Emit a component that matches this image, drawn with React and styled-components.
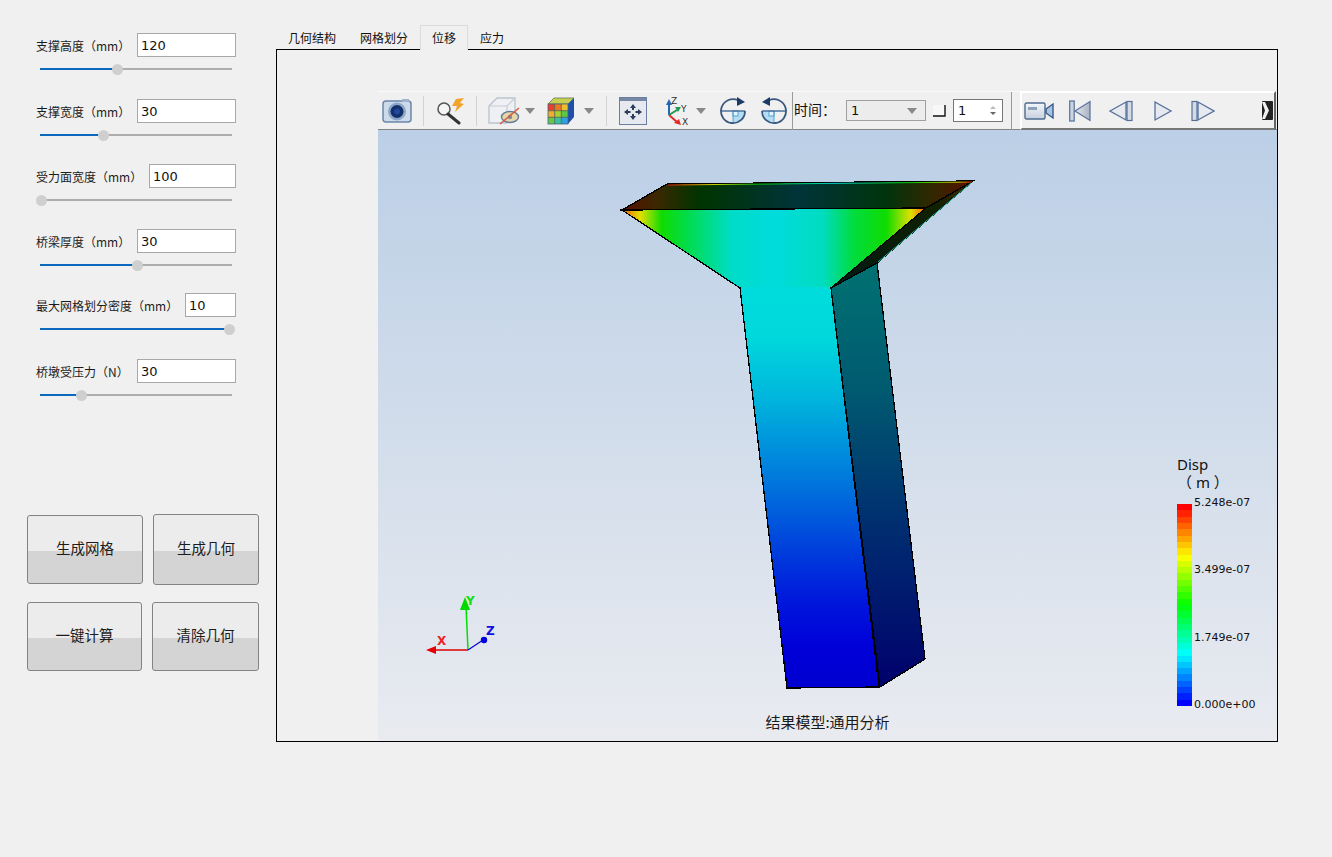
import styled, { createGlobalStyle } from 'styled-components';

const CJK = '"Noto Sans CJK SC", "Noto Sans", sans-serif';

const params = [
  { label: '支撑高度（mm）', value: '120', inputW: 99, knob: 77, height: 66 },
  { label: '支撑宽度（mm）', value: '30', inputW: 99, knob: 63, height: 65 },
  { label: '受力面宽度（mm）', value: '100', inputW: 87, knob: 1, height: 65 },
  { label: '桥梁厚度（mm）', value: '30', inputW: 99, knob: 97, height: 64 },
  { label: '最大网格划分密度（mm）', value: '10', inputW: 51, knob: 189, height: 66 },
  { label: '桥墩受压力（N）', value: '30', inputW: 99, knob: 41, height: 65 },
];

const tabs = ['几何结构', '网格划分', '位移', '应力'];

const Global = createGlobalStyle`
  html, body {
    margin: 0;
    background: #f0f0f0;
    font-family: ${CJK};
  }
`;

const Page = styled.div`
  width: 1332px;
  height: 857px;
  display: flex;
  overflow: hidden;
  background: #f0f0f0;
`;

const Sidebar = styled.aside`
  width: 276px;
  flex: none;
  padding-top: 33px;
  box-sizing: border-box;
`;

const Group = styled.div`
  height: ${(p) => p.$height}px;
  margin-left: 36px;
  width: 200px;
`;

const FieldRow = styled.div`
  height: 24px;
  display: flex;
  align-items: center;
  justify-content: space-between;
`;

const Label = styled.span`
  font-size: 12px;
  color: #1c1c1c;
  white-space: nowrap;
`;

const Field = styled.div`
  width: ${(p) => p.$w}px;
  height: 24px;
  box-sizing: border-box;
  border: 1px solid #a8a8a8;
  background: #fff;
  padding-left: 3px;
  font: 13px/24px "DejaVu Sans", sans-serif;
  color: #111;
`;

const Slider = styled.div`
  margin: 7px 0 0 4px;
  width: 192px;
  height: 10px;
  display: flex;
  align-items: center;
`;

const Filled = styled.div`
  height: 2px;
  background: #0a68bd;
  flex: none;
`;

const Knob = styled.div`
  width: 11px;
  height: 11px;
  border-radius: 50%;
  background: #cfcfcf;
  flex: none;
  margin: 0 -5px;
  position: relative;
`;

const Rest = styled.div`
  height: 2px;
  flex: 1;
  background: #adadad;
`;

const ButtonRow = styled.div`
  margin: ${(p) => p.$mt}px 0 0 27px;
  width: 232px;
  height: ${(p) => p.$h}px;
  display: flex;
  align-items: center;
  gap: 10px;
`;

const ActionButton = styled.button`
  width: ${(p) => p.$w}px;
  height: ${(p) => p.$h}px;
  flex: none;
  padding: 0 0 5px;
  border: 1px solid #838383;
  border-radius: 3px;
  background: linear-gradient(#ececec 0 52%, #d4d4d4 52% 100%);
  font: 14.5px ${CJK};
  color: #1c1c1c;
`;

const Main = styled.main`
  width: 1002px;
  flex: none;
  margin-top: 25px;
`;

const TabBar = styled.div`
  height: 24px;
  display: flex;
`;

const Tab = styled.div`
  padding: 0 ${(p) => (p.$active ? 11 : 12)}px;
  box-sizing: border-box;
  line-height: 25px;
  font-size: 12px;
  color: #111;
  background: #f0f0f0;
  border: ${(p) => (p.$active ? '1px solid #dcdcdc' : 'none')};
  border-bottom: none;
  ${(p) => p.$active && 'position: relative; z-index: 1; height: 25px; line-height: 23px;'}
`;

const Frame = styled.div`
  height: 693px;
  box-sizing: border-box;
  border: 1px solid #000;
  padding: 41px 0 0 101px;
`;

const Viewer = styled.div`
  height: 650px;
  display: flex;
  flex-direction: column;
`;

const Toolbar = styled.div`
  height: 39px;
  flex: none;
  box-sizing: border-box;
  display: flex;
  align-items: center;
  border-top: 1px solid #fafafa;
  border-bottom: 1px solid #858585;
  background: #f0f0f0;
`;

const Slot = styled.div`
  width: ${(p) => p.$w}px;
  margin-left: ${(p) => p.$ml || 0}px;
  flex: none;
  display: flex;
  justify-content: center;
  align-items: center;
`;

const Sep = styled.div`
  width: 1px;
  height: ${(p) => (p.$dark ? 38 : 30)}px;
  margin-left: ${(p) => p.$ml || 0}px;
  flex: none;
  background: ${(p) => (p.$dark ? '#9a9a9a' : '#d2d2d2')};
`;

const TimeLabel = styled.span`
  width: 40px;
  margin: 0 0 3px 1px;
  flex: none;
  font-size: 14px;
  color: #111;
  white-space: nowrap;
`;

const Combo = styled.div`
  width: 80px;
  height: 21px;
  margin-left: 12px;
  flex: none;
  box-sizing: border-box;
  border: 1px solid #a0a0a0;
  background: #ececec;
  padding: 0 8px 0 4px;
  display: flex;
  align-items: center;
  justify-content: space-between;
  font: 13px "DejaVu Sans", sans-serif;
  color: #111;
`;

const Caret = styled.div`
  width: 0;
  height: 0;
  border-left: 5px solid transparent;
  border-right: 5px solid transparent;
  border-top: 6px solid #888;
`;

const Spin = styled.div`
  width: 50px;
  height: 23px;
  margin-left: 7px;
  flex: none;
  box-sizing: border-box;
  border: 1px solid #777;
  background: #fff;
  padding: 0 6px 0 4px;
  display: flex;
  align-items: center;
  justify-content: space-between;
  font: 13px "DejaVu Sans", sans-serif;
  color: #111;
`;

const SpinArrows = styled.div`
  display: flex;
  flex-direction: column;
  gap: 3px;
  &::before, &::after {
    content: '';
    width: 0;
    height: 0;
    border-left: 3px solid transparent;
    border-right: 3px solid transparent;
  }
  &::before { border-bottom: 3px solid #bbb; }
  &::after { border-top: 3px solid #666; }
`;

const PlayBar = styled.div`
  flex: 1;
  align-self: stretch;
  margin: -1px 1px -1px 8px;
  box-sizing: border-box;
  display: flex;
  align-items: center;
  border-top: 2px solid #fff;
  border-left: 2px solid #fff;
  border-right: 2px solid #666;
  border-bottom: 2px solid #777;
`;

const Overflow = styled.div`
  margin: 0 1px 0 auto;
  display: flex;
`;

const Canvas = styled.div`
  flex: 1;
  position: relative;
  background: linear-gradient(#bbcfe6, #e9ebf0);
  overflow: hidden;
`;

const Scene = styled.svg`
  display: block;
  width: 100%;
  height: 100%;
`;

const Legend = styled.div`
  position: absolute;
  left: 799px;
  top: 325px;
  color: #111;
`;

const LegendTitle = styled.div`
  font: 15px/18px "Noto Sans", ${CJK};
  white-space: pre;
`;

const LegendBody = styled.div`
  margin-top: 13px;
  display: flex;
  height: 202px;
`;

const ColorBar = styled.div`
  width: 15px;
  display: flex;
  flex-direction: column;
`;

const Swatch = styled.div`
  flex: 1;
`;

const Ticks = styled.div`
  margin: -8px 0 -6px 2px;
  display: flex;
  flex-direction: column;
  justify-content: space-between;
  font: 11px/14px "DejaVu Sans", sans-serif;
`;

const Caption = styled.div`
  position: absolute;
  left: 0;
  right: 0;
  bottom: 10px;
  text-align: center;
  font-size: 15px;
  line-height: 18px;
  color: #1a1a1a;
`;

const RotateSvg = styled.svg`
  ${(p) => p.$flip && 'transform: scaleX(-1);'}
`;

// rainbow steps of the colour bar, red on top and blue at the bottom
const rampColor = (t) => {
  const stops = [
    [255, 0, 0], [255, 255, 0], [0, 255, 0], [0, 255, 255], [0, 0, 255],
  ];
  const pos = Math.min(t * 4, 3.999);
  const i = Math.floor(pos);
  const f = pos - i;
  const c = stops[i].map((v, k) => Math.round(v + (stops[i + 1][k] - v) * f));
  return `rgb(${c.join(',')})`;
};

const rampSteps = Array.from({ length: 32 }, (_, i) => rampColor(i / 31));

const CameraIcon = () => (
  <svg width="30" height="26" viewBox="0 0 30 26">
    <rect x="1" y="3" width="28" height="21" rx="3" fill="#cddaea" stroke="#6b87a8" strokeWidth="1.5" />
    <rect x="20" y="1" width="7" height="3" fill="#9fb4cc" />
    <circle cx="15" cy="13.5" r="9" fill="#8aa6c8" />
    <circle cx="15" cy="13.5" r="6.5" fill="#14306a" />
    <circle cx="15" cy="13.5" r="3" fill="#22489a" />
  </svg>
);

const SearchIcon = () => (
  <svg width="30" height="28" viewBox="0 0 30 28">
    <circle cx="9" cy="12" r="6" fill="#f5f5f5" stroke="#555" strokeWidth="1.5" />
    <path d="M13 17 L24 26" stroke="#333" strokeWidth="3" strokeLinecap="round" />
    <path d="M21 2 L29 1 L25 6 L29 7 L20 15 L22 9 L17 9 Z" fill="#f2a32c" />
  </svg>
);

const BoxIcon = () => (
  <svg width="34" height="28" viewBox="0 0 34 28">
    <path d="M1 9 L9 1 L27 1 L27 17 L19 26 L1 26 Z" fill="#eef0f3" stroke="#b9c2ce" strokeWidth="1.3" />
    <path d="M1 9 L19 9 L27 1 M19 9 L19 26" fill="none" stroke="#c5ccd6" strokeWidth="1.2" />
    <ellipse cx="22" cy="20" rx="8.5" ry="5.5" fill="#e8d7a6" stroke="#5f7c9c" strokeWidth="1.4" />
    <circle cx="22" cy="20" r="2.2" fill="#7d8fa3" />
    <path d="M12 27 L31 11" stroke="#d6573c" strokeWidth="1.4" />
  </svg>
);

const cubeCells = [
  ['#e8402c', '#ec7a24', '#e8c030'],
  ['#ecae2c', '#a8d030', '#5cc848'],
  ['#64c850', '#38c0a0', '#30a0e0'],
];

const CubeIcon = () => (
  <svg width="28" height="28" viewBox="0 0 28 28">
    <path d="M1 7 L7 1 L27 1 L21 7 Z" fill="#c8d050" stroke="#5f7a55" strokeWidth="0.8" />
    <path d="M21 7 L27 1 L27 20 L21 27 Z" fill="#1f4fae" />
    {cubeCells.map((row, r) =>
      row.map((c, k) => (
        <rect key={`${r}-${k}`} x={1 + k * 6.67} y={7 + r * 6.67} width="6.67" height="6.67" fill={c} />
      ))
    )}
    <path d="M7.7 7 V27 M14.3 7 V27 M1 13.7 H21 M1 20.3 H21" stroke="#4d5a48" strokeWidth="0.8" />
    <rect x="1" y="7" width="20" height="20" fill="none" stroke="#4a5f7a" strokeWidth="0.8" />
  </svg>
);

const FitIcon = () => (
  <svg width="28" height="28" viewBox="0 0 28 28">
    <rect x="0.5" y="0.5" width="27" height="27" fill="#e6eaf0" stroke="#6d7f9f" />
    <rect x="1" y="1" width="26" height="3" fill="#7587a5" />
    <g fill="#2c3e5c">
      <path d="M14 7 L11 11 H13 V13 H15 V11 H17 Z" />
      <path d="M14 23 L11 19 H13 V17 H15 V19 H17 Z" />
      <path d="M5 15 L9 12 V14 H11.5 V16 H9 V18 Z" />
      <path d="M23 15 L19 12 V14 H16.5 V16 H19 V18 Z" />
    </g>
  </svg>
);

const AxesIcon = () => (
  <svg width="36" height="32" viewBox="0 0 36 32">
    <path d="M12 20 V8" stroke="#2566b0" strokeWidth="2" />
    <path d="M9 10 L12 4 L15 10 Z" fill="#2566b0" />
    <path d="M12 20 L20 15" stroke="#1d9a50" strokeWidth="2" />
    <path d="M18 12 L24 12 L21 17 Z" fill="#1d9a50" />
    <path d="M12 20 L20 27" stroke="#dc2c2c" strokeWidth="2" />
    <path d="M17 28 L24 30 L22 24 Z" fill="#dc2c2c" />
    <text x="14" y="9" fontSize="9" fontFamily="DejaVu Sans" fill="#333">Z</text>
    <text x="24" y="17" fontSize="9" fontFamily="DejaVu Sans" fill="#333">Y</text>
    <text x="25" y="30" fontSize="9" fontFamily="DejaVu Sans" fill="#333">X</text>
  </svg>
);

const RotateIcon = ({ flip }) => (
  <RotateSvg $flip={flip} width="28" height="28" viewBox="0 0 28 28">
    <path d="M14 14 H26 A12 12 0 0 1 14 26 Z" fill="#b4dcf3" />
    <rect x="14" y="14" width="5" height="5" fill="#e4f3fb" stroke="#3a94cc" strokeWidth="0.8" />
    <path d="M14 14 V26" stroke="#3a94cc" strokeWidth="0.8" />
    <path d="M2 14 H26" stroke="#3f6a96" strokeWidth="1.4" />
    <path d="M19 3.2 A12 12 0 1 0 26 14" fill="none" stroke="#3a587e" strokeWidth="1.8" />
    <path d="M18 0 L26 5 L18 9 Z" fill="#1c3a66" />
  </RotateSvg>
);

const CornerIcon = () => (
  <svg width="13" height="12" viewBox="0 0 13 12">
    <rect x="0" y="0" width="12" height="11" fill="#f7f7f7" />
    <path d="M0 11 H12 V0" fill="none" stroke="#111" strokeWidth="1.4" />
  </svg>
);

const VideoIcon = () => (
  <svg width="30" height="18" viewBox="0 0 30 18">
    <defs>
      <linearGradient id="videoBody" x1="0" y1="0" x2="0" y2="1">
        <stop offset="0" stopColor="#f4f6f9" />
        <stop offset="1" stopColor="#c6d0de" />
      </linearGradient>
    </defs>
    <rect x="1" y="1" width="20" height="16" rx="1.5" fill="url(#videoBody)" stroke="#4f6b90" strokeWidth="1.4" />
    <rect x="4" y="5" width="9" height="3" fill="#8fa1b8" />
    <path d="M22 7 L29 2 V16 L22 11 Z" fill="#a9c4de" stroke="#35598a" strokeWidth="1.4" />
  </svg>
);

const FirstIcon = () => (
  <svg width="22" height="22" viewBox="0 0 22 22">
    <defs>
      <linearGradient id="firstFill" x1="0" y1="0" x2="1" y2="0">
        <stop offset="0" stopColor="#e5e8ee" />
        <stop offset="1" stopColor="#aab2bf" />
      </linearGradient>
    </defs>
    <rect x="0.7" y="1" width="4.5" height="20" fill="#ccd4df" stroke="#54709a" strokeWidth="1.2" />
    <path d="M6 11 L21 1.5 V20.5 Z" fill="url(#firstFill)" stroke="#54709a" strokeWidth="1.2" />
  </svg>
);

const PrevIcon = () => (
  <svg width="24" height="22" viewBox="0 0 24 22">
    <path d="M1 11 L17 2 V20 Z" fill="#e6e9ef" stroke="#54709a" strokeWidth="1.3" />
    <rect x="18" y="1.5" width="5" height="19" fill="#d5dbe4" stroke="#54709a" strokeWidth="1.2" />
  </svg>
);

const PlayIcon = () => (
  <svg width="20" height="22" viewBox="0 0 20 22">
    <path d="M2 2 L18 11 L2 20 Z" fill="#e6e9ef" stroke="#54709a" strokeWidth="1.3" />
  </svg>
);

const NextIcon = () => (
  <svg width="24" height="22" viewBox="0 0 24 22">
    <rect x="1" y="1.5" width="5" height="19" fill="#d5dbe4" stroke="#54709a" strokeWidth="1.2" />
    <path d="M7 2 L23 11 L7 20 Z" fill="#e6e9ef" stroke="#54709a" strokeWidth="1.3" />
  </svg>
);

const OverflowIcon = () => (
  <svg width="11" height="19" viewBox="0 0 11 19">
    <rect width="11" height="19" rx="1" fill="#222" />
    <path d="M0 1 H3 L7 9.5 L3 18 H0 L3 9.5 Z" fill="#f0f0f0" />
  </svg>
);

const flareStops = [
  [0, '#f04a10'], [0.03, '#e8a000'], [0.06, '#e0e000'], [0.13, '#10dc00'],
  [0.22, '#00dc50'], [0.36, '#00dcc8'], [0.5, '#00dcdc'], [0.66, '#00dcc0'],
  [0.76, '#00dc40'], [0.87, '#10dc00'], [0.95, '#e0e000'], [0.985, '#f08000'], [1, '#f04010'],
];

const columnStops = [
  [0, '#00dcdc'], [0.12, '#00d8dc'], [0.28, '#00b4dc'], [0.4, '#0090dc'],
  [0.53, '#0068dc'], [0.65, '#0040dc'], [0.78, '#0018dc'], [0.9, '#0000d8'], [1, '#0000d0'],
];

const Model = () => (
  <Scene viewBox="378 130 899 611">
    <defs>
      <linearGradient id="flare" gradientUnits="userSpaceOnUse" x1="622" y1="0" x2="926" y2="0">
        {flareStops.map(([o, c]) => <stop key={o} offset={o} stopColor={c} />)}
      </linearGradient>
      <linearGradient id="column" gradientUnits="userSpaceOnUse" x1="0" y1="288" x2="0" y2="688">
        {columnStops.map(([o, c]) => <stop key={o} offset={o} stopColor={c} />)}
      </linearGradient>
      <linearGradient id="side" gradientUnits="userSpaceOnUse" x1="0" y1="263" x2="0" y2="687">
        <stop offset="0" stopColor="#007272" />
        <stop offset="0.3" stopColor="#005a70" />
        <stop offset="0.6" stopColor="#003070" />
        <stop offset="1" stopColor="#00006c" />
      </linearGradient>
      <linearGradient id="deck" gradientUnits="userSpaceOnUse" x1="622" y1="0" x2="973" y2="0">
        <stop offset="0" stopColor="#5a1000" />
        <stop offset="0.1" stopColor="#3a2800" />
        <stop offset="0.22" stopColor="#003400" />
        <stop offset="0.5" stopColor="#00343a" />
        <stop offset="0.75" stopColor="#00340c" />
        <stop offset="0.88" stopColor="#302800" />
        <stop offset="1" stopColor="#5a1000" />
      </linearGradient>
      <linearGradient id="under" gradientUnits="userSpaceOnUse" x1="973" y1="181" x2="831" y2="288">
        <stop offset="0" stopColor="#4a2a00" />
        <stop offset="0.25" stopColor="#102000" />
        <stop offset="1" stopColor="#001a14" />
      </linearGradient>
      <linearGradient id="rim" gradientUnits="userSpaceOnUse" x1="667" y1="0" x2="973" y2="0">
        <stop offset="0" stopColor="#e02000" />
        <stop offset="0.15" stopColor="#d0d000" />
        <stop offset="0.3" stopColor="#00c800" />
        <stop offset="0.55" stopColor="#00d0d0" />
        <stop offset="0.8" stopColor="#00c800" />
        <stop offset="0.95" stopColor="#d0d000" />
        <stop offset="1" stopColor="#e02000" />
      </linearGradient>
    </defs>

    <g stroke="#000" strokeWidth="1.3" shapeRendering="crispEdges">
      <polygon points="831,288 877,263 925,659 880,687" fill="url(#side)" />
      <polygon points="926,208 973,181 877,263 831,288" fill="url(#under)" />
      <polygon points="622,210 667,184 973,181 926,208" fill="url(#deck)" />
      <polygon points="740,288 831,288 879,687 787,688" fill="url(#column)" />
      <polygon points="622,210 926,208 831,288 740,288" fill="url(#flare)" />
    </g>
    <line x1="741" y1="288" x2="830" y2="288" stroke="#00dcdc" strokeWidth="2" />
    <line x1="668" y1="185" x2="972" y2="182" stroke="url(#rim)" strokeWidth="1" />
    <line x1="971" y1="183" x2="878" y2="262" stroke="#30c0a0" strokeWidth="1" />

    {/* axis triad */}
    <path d="M468 650 L466 606" stroke="#00e000" strokeWidth="1.5" fill="none" />
    <path d="M460 610 L465 597 L470 610 Z" fill="#00d800" />
    <path d="M468 650 L433 650" stroke="#e00000" strokeWidth="1.5" fill="none" />
    <path d="M426 650 L436 646 L436 654 Z" fill="#e80000" />
    <path d="M468 650 L483 640" stroke="#0000d8" strokeWidth="1.2" fill="none" />
    <circle cx="484" cy="640" r="3.2" fill="#0000e0" />
    <text x="466" y="605" fontSize="12" fontWeight="700" fontFamily="DejaVu Sans" fill="#10e010">Y</text>
    <text x="437" y="645" fontSize="12" fontWeight="700" fontFamily="DejaVu Sans" fill="#f02020">X</text>
    <text x="486" y="635" fontSize="12" fontWeight="700" fontFamily="DejaVu Sans" fill="#1010e0">Z</text>
  </Scene>
);

export default function App() {
  return (
    <Page>
      <Global />
      <Sidebar>
        {params.map((p) => (
          <Group key={p.label} $height={p.height}>
            <FieldRow>
              <Label>{p.label}</Label>
              <Field $w={p.inputW}>{p.value}</Field>
            </FieldRow>
            <Slider>
              <Filled style={{ width: p.knob }} />
              <Knob />
              <Rest />
            </Slider>
          </Group>
        ))}
        <ButtonRow $mt={90} $h={71}>
          <ActionButton $w={116} $h={69}>生成网格</ActionButton>
          <ActionButton $w={106} $h={71}>生成几何</ActionButton>
        </ButtonRow>
        <ButtonRow $mt={17} $h={69}>
          <ActionButton $w={115} $h={69}>一键计算</ActionButton>
          <ActionButton $w={107} $h={69}>清除几何</ActionButton>
        </ButtonRow>
      </Sidebar>

      <Main>
        <TabBar>
          {tabs.map((t) => (
            <Tab key={t} $active={t === '位移'}>{t}</Tab>
          ))}
        </TabBar>
        <Frame>
          <Viewer>
            <Toolbar>
              <Slot $w={38}><CameraIcon /></Slot>
              <Sep $ml={7} />
              <Slot $w={52}><SearchIcon /></Slot>
              <Sep />
              <Slot $w={34} $ml={11}><BoxIcon /></Slot>
              <Slot $w={10} $ml={3}><Caret /></Slot>
              <Slot $w={34} $ml={9}><CubeIcon /></Slot>
              <Slot $w={10} $ml={6}><Caret /></Slot>
              <Sep $ml={12} />
              <Slot $w={30} $ml={11}><FitIcon /></Slot>
              <Slot $w={36} $ml={9}><AxesIcon /></Slot>
              <Slot $w={10} $ml={3}><Caret /></Slot>
              <Slot $w={32} $ml={11}><RotateIcon /></Slot>
              <Slot $w={32} $ml={9}><RotateIcon flip /></Slot>
              <Sep $ml={2} $dark />
              <TimeLabel>时间：</TimeLabel>
              <Combo>1<Caret /></Combo>
              <Slot $w={13} $ml={7}><CornerIcon /></Slot>
              <Spin>1<SpinArrows /></Spin>
              <Sep $ml={8} $dark />
              <PlayBar>
                <Slot $w={34}><VideoIcon /></Slot>
                <Slot $w={22} $ml={13}><FirstIcon /></Slot>
                <Slot $w={24} $ml={18}><PrevIcon /></Slot>
                <Slot $w={20} $ml={20}><PlayIcon /></Slot>
                <Slot $w={24} $ml={18}><NextIcon /></Slot>
                <Overflow><OverflowIcon /></Overflow>
              </PlayBar>
            </Toolbar>
            <Canvas>
              <Model />
              <Legend>
                <LegendTitle>{'Disp\n（ m ）'}</LegendTitle>
                <LegendBody>
                  <ColorBar>
                    {rampSteps.map((c) => <Swatch key={c} style={{ background: c }} />)}
                  </ColorBar>
                  <Ticks>
                    <span>5.248e-07</span>
                    <span>3.499e-07</span>
                    <span>1.749e-07</span>
                    <span>0.000e+00</span>
                  </Ticks>
                </LegendBody>
              </Legend>
              <Caption>结果模型:通用分析</Caption>
            </Canvas>
          </Viewer>
        </Frame>
      </Main>
    </Page>
  );
}
